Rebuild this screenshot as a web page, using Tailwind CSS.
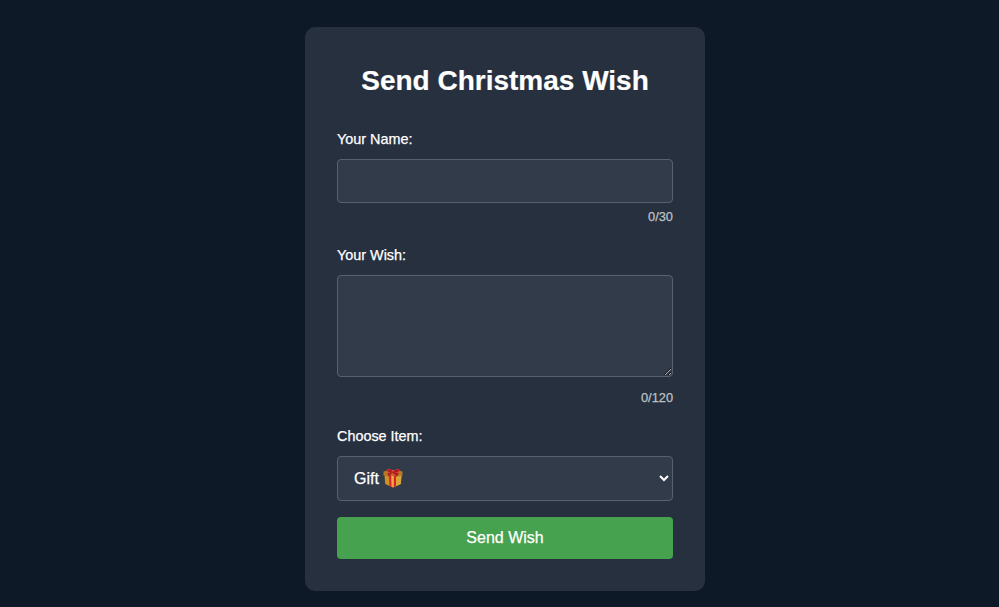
<!DOCTYPE html>
<html lang="en"><head><meta charset="utf-8"><title>Send Christmas Wish</title>
<script src="https://cdn.jsdelivr.net/npm/@tailwindcss/browser@4"></script></head>
<body class="flex h-screen justify-center overflow-hidden bg-[#0d1927] pt-[27px] pl-[11px] font-['Liberation_Sans',Arial,sans-serif] text-white">
<form class="flex h-[564px] w-[400px] flex-col rounded-[10px] bg-[#27303f] px-8 pt-8">
<h1 class="mt-[5px] text-center text-[28px] leading-[33px] font-bold [-webkit-text-stroke:0.2px_currentColor]">Send Christmas Wish</h1>
<label for="name" class="mt-[34px] text-[14.4px] leading-[17px] [-webkit-text-stroke:0.25px_currentColor]">Your Name:</label>
<input id="name" maxlength="30" class="mt-[11px] h-11 w-full shrink-0 rounded-[4px] border border-[#59616d] bg-[#323b49] px-4">
<div class="mt-[6px] text-right text-[12.8px] leading-[15px] text-[#bec1c5] [-webkit-text-stroke:0.25px_currentColor]">0/30</div>
<label for="wish" class="mt-[23px] text-[14.4px] leading-[17px] [-webkit-text-stroke:0.25px_currentColor]">Your Wish:</label>
<textarea id="wish" maxlength="120" class="mt-[11px] h-[102px] w-full shrink-0 resize-y rounded-[4px] border border-[#59616d] bg-[#323b49] px-4"></textarea>
<div class="mt-[13px] text-right text-[12.8px] leading-[15px] text-[#bec1c5] [-webkit-text-stroke:0.25px_currentColor]">0/120</div>
<label for="item" class="mt-[23px] text-[14.4px] leading-[17px] [-webkit-text-stroke:0.25px_currentColor]">Choose Item:</label>
<div class="relative mt-[11px] h-[45px] shrink-0">
<select id="item" class="block h-[45px] w-full rounded-[4px] border border-[#59616d] bg-[#323b49] px-3 text-base [-webkit-text-stroke:0.25px_currentColor]"><option>Gift</option></select>
<svg class="pointer-events-none absolute top-[12px] left-[46px] h-5 w-5" viewBox="0 0 20 20" aria-label="Gift">
<path d="M1.5 7L10 9l8.5-2-.7 9-7.8 3.5L2.2 16z" fill="#cf9126"/>
<path d="M10 9l8.5-2-.7 9-7.8 3.5z" fill="#dba638"/>
<path d="M.5 3.5L6 2h8l5.5 1.5v4L10 9.5.5 7.5z" fill="#b97824"/>
<path d="M6 7.5l7 .3v10.5L10 19.6 6.5 18z" fill="#d9222a"/>
<path d="M8.2 8h2.6v11.2L8.5 18.7z" fill="#edae3c"/>
<path d="M10 3.5C8 .2 4.5.2 3.8 2c-.5 1.7 2.5 3 5.8 3.2C13 5.3 17 4.4 16.5 2.2 15.7.2 12 .6 10 3.5z" fill="#d8252d"/>
<path d="M9.5 4L4.5 5.2l.8 3.2L9.5 5l4.5 3.6 2-3.4z" fill="#b51c25"/>
<path d="M5 2.3c1.3-.4 2.8 0 4 1.3-1.8.2-3.4-.1-4-1.3zm6 1.4c1.1-1.2 2.8-1.7 4.2-1.2-.8 1-2.4 1.3-4.2 1.2z" fill="#84191d"/>
</svg></div>
<button type="button" class="mt-4 h-[42px] shrink-0 rounded-[4px] bg-[#46a24e] text-base [-webkit-text-stroke:0.25px_currentColor]">Send Wish</button>
</form></body></html>
